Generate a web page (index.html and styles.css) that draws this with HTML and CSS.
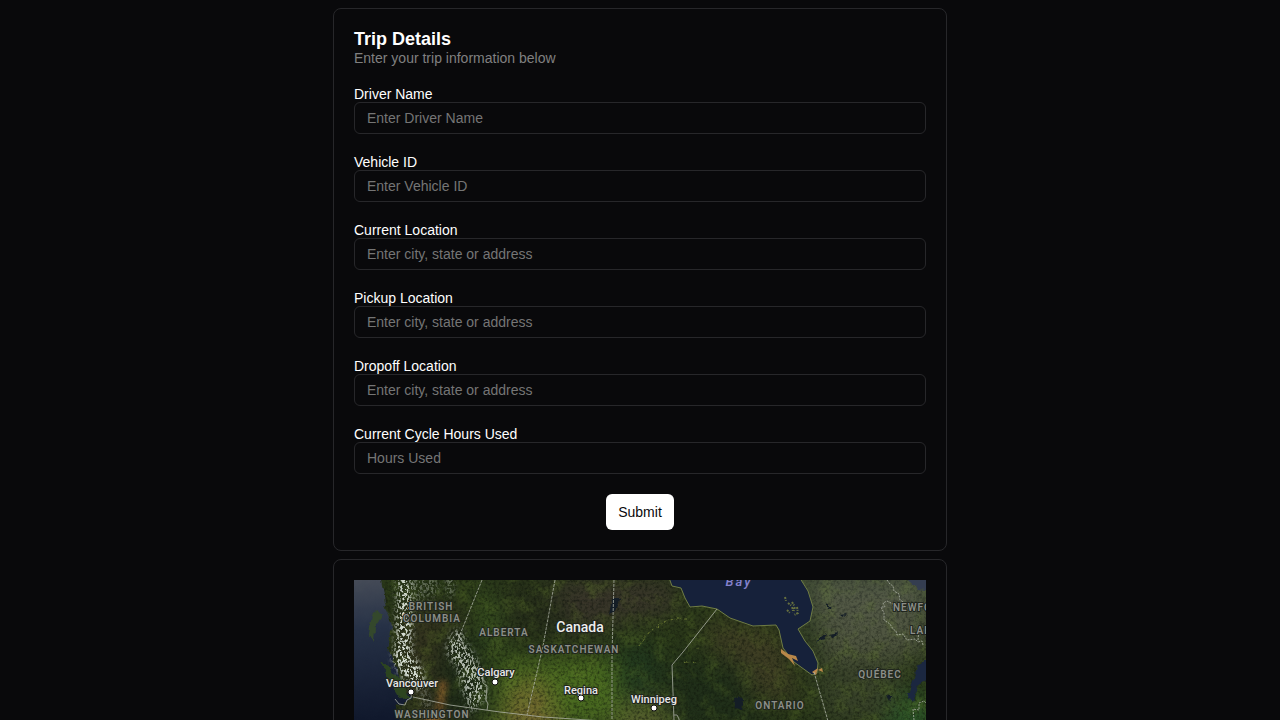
FILE: index.html
```html
<!DOCTYPE html>
<html lang="en">
<head>
<meta charset="utf-8">
<meta name="viewport" content="width=device-width, initial-scale=1">
<title>Trip Details</title>
<link rel="stylesheet" href="styles.css">
</head>
<body>
<main class="page">
  <section class="card">
    <form class="trip-form">
      <header>
        <h1 class="title">Trip Details</h1>
        <p class="subtitle">Enter your trip information below</p>
      </header>
      <div class="field">
        <label for="driver">Driver Name</label>
        <input id="driver" type="text" placeholder="Enter Driver Name">
      </div>
      <div class="field">
        <label for="vehicle">Vehicle ID</label>
        <input id="vehicle" type="text" placeholder="Enter Vehicle ID">
      </div>
      <div class="field">
        <label for="current">Current Location</label>
        <input id="current" type="text" placeholder="Enter city, state or address">
      </div>
      <div class="field">
        <label for="pickup">Pickup Location</label>
        <input id="pickup" type="text" placeholder="Enter city, state or address">
      </div>
      <div class="field">
        <label for="dropoff">Dropoff Location</label>
        <input id="dropoff" type="text" placeholder="Enter city, state or address">
      </div>
      <div class="field">
        <label for="hours">Current Cycle Hours Used</label>
        <input id="hours" type="text" placeholder="Hours Used">
      </div>
      <button class="submit" type="submit">Submit</button>
    </form>
  </section>

  <section class="card">
    <svg class="map" viewBox="0 0 572 400" preserveAspectRatio="xMidYMin slice" role="img" aria-label="Satellite map">
      <defs>
        <filter id="soft" x="-50%" y="-50%" width="200%" height="200%"><feGaussianBlur stdDeviation="12"/></filter>
        <filter id="edge" x="-50%" y="-50%" width="200%" height="200%"><feGaussianBlur stdDeviation="3"/></filter>
        <filter id="grain" x="0" y="0" width="100%" height="100%">
          <feTurbulence type="fractalNoise" baseFrequency="0.35" numOctaves="3" seed="4"/>
          <feColorMatrix values="0 0 0 0 0.04  0 0 0 0 0.06  0 0 0 0 0.03  2.4 0 0 0 -1"/>
        </filter>
        <filter id="mottle" x="0" y="0" width="100%" height="100%">
          <feTurbulence type="fractalNoise" baseFrequency="0.06" numOctaves="5" seed="9"/>
          <feColorMatrix values="0 0 0 0 0.38  0 0 0 0 0.48  0 0 0 0 0.17  0 3 0 0 -1.4"/>
        </filter>
        <filter id="snow" x="-10%" y="-10%" width="120%" height="120%">
          <feGaussianBlur in="SourceAlpha" stdDeviation="3" result="shape"/>
          <feTurbulence type="fractalNoise" baseFrequency="0.45 0.3" numOctaves="4" seed="12"/>
          <feColorMatrix values="0 0 0 0 0.84  0 0 0 0 0.87  0 0 0 0 0.83  7 0 0 0 -3.3"/>
          <feComposite in2="shape" operator="in"/>
        </filter>
        <filter id="rough" x="-5%" y="-5%" width="110%" height="110%">
          <feTurbulence type="fractalNoise" baseFrequency="0.12" numOctaves="3" seed="2" result="n"/>
          <feDisplacementMap in="SourceGraphic" in2="n" scale="6" xChannelSelector="R" yChannelSelector="G"/>
        </filter>
        <linearGradient id="pacific" gradientUnits="userSpaceOnUse" x1="0" y1="0" x2="12" y2="140">
          <stop offset="0" stop-color="#454b57"/><stop offset="0.35" stop-color="#263146"/><stop offset="1" stop-color="#10182c"/>
        </linearGradient>
        <linearGradient id="haze" x1="0" y1="0" x2="0" y2="1">
          <stop offset="0" stop-color="#8c939c" stop-opacity="0.16"/><stop offset="1" stop-color="#8c939c" stop-opacity="0"/>
        </linearGradient>
      </defs>

      <rect width="572" height="400" fill="#293719"/>
      <g filter="url(#soft)">
        <path fill="#34331f" d="M45 30h65v130H60z"/>
        <path fill="#1f2c18" d="M88 50h45l20 90H80z"/>
        <path fill="#3a5520" d="M128 8l55 12-30 50-30-10z"/>
        <path fill="#262e1a" d="M140 0h100v60h-90z"/>
        <path fill="#39352a" d="M195 0h120l15 30-110 20z"/>
        <path fill="#4a6b20" d="M140 80h55l75-4 18 64-150 10z"/>
        <path fill="#74682f" d="M158 106l30-8 20 60h-60z"/>
        <path fill="#20371e" d="M262 65h42v60h-38z"/>
        <path fill="#56602d" d="M268 120h48v50h-60z"/>
        <path fill="#3f3e24" d="M345 40l80 10 20 70-60-5z"/>
        <path fill="#202f19" d="M310 80h75l30 70h-100z"/>
        <path fill="#4b513a" d="M455 0h117v75l-100 10z"/>
        <path fill="#384229" d="M460 80h90v60h-80z"/>
        <path fill="#2b5427" d="M540 115h40v60h-50z"/>
        <path fill="#596222" d="M95 205h190v195H70z"/>
      </g>
      <rect class="fine" width="572" height="400" filter="url(#mottle)" opacity="0.32"/>
      <g fill="#9a642e" filter="url(#edge)" opacity="0.8">
        <path d="M86 100l7 2-4 25-7 10z"/><path d="M72 134l18-3-6 18H70z"/>
      </g>
      <rect class="fine" width="572" height="400" filter="url(#grain)" opacity="0.5"/>
      <rect x="440" width="132" height="90" fill="url(#haze)"/>

      <g filter="url(#rough)">
        <path fill="url(#pacific)" d="M-8-8H26L32 28 38 45 34 68 42 88 48 106 58 116 48 126 42 124 48 150 40 408H-8z"/>
        <path fill="#34482c" d="M18 35l7-4 3 5-7 11-1 16-5-10z"/>
        <path fill="#2c4420" d="M27 82l9 6 15 18 5 12-10 1-10-17z"/>
        <path fill="#1b2740" d="M563 87l11-9v22l-9 5-7 18-4-5z"/>
        <path fill="#343d50" d="M548-5h30v16l-14-2z"/>
        <path fill="#141d26" d="M258 19l7 0-2 8-4 5-4 2zM379 119l6-3 5 5-2 9-7-1zM532 115l7 2-4 4zM466 57l7-4-3 6-9 4zM476 54l9-2-6 6zM486 34l8-1-5 3zM471 24l7 3-4 2z"/>
      </g>
      <path fill="#16213a" stroke="#6f7c45" d="M314-5l4 11 9 2 4 10 5 9 12-1 15 3 13 9 23 8 23-1 3 5 4 18 11 14 18 13 5-2 1-10-5-12-8-10-7-12 12-8 3-14-5-16-10-16z"/>
      <path fill="#b98749" d="M427 69l7 5 8 2 2 5-6-3 3 8-6-7-8-6zM458 92l6-4-2 7zM464 90l4-2 1 4z"/>
      <path fill="none" stroke="#66703f" stroke-width="2" stroke-dasharray="2 1 1 2" d="M434 23l4 3 1 5M438 22l3 5-2 6M443 27l1 6-4 2M431 17l1 4M433 30l3 3"/>

      <g class="fine" filter="url(#snow)">
        <path fill="#fff" d="M44-5h12l1 24 1 27-1 26 12 20 1 18-11-1-12-14-8-15 3-20z"/>
        <path fill="#fff" opacity="0.5" d="M93-5h6v21h-6z"/>
        <path fill="#fff" opacity="0.8" d="M100 50l8 1 2 10 12 17 8 23 2 19-7 1-8 14-8-26-6-22-9-12-1-10z"/>
        <path fill="#fff" opacity="0.3" d="M56-5h28v20l-25 8zM66 105l9 10 4 30-10-10z"/>
      </g>
      <path filter="url(#rough)" fill="none" stroke="#6f7d34" stroke-dasharray="3 1 1 2" d="M284 66l12-15 12-8 10-5 14 0M331 81l3 2 8-1M341 70l4-2"/>

      <g class="border">
        <path stroke-dasharray="3 1" d="M128 0L107 52M201 0L189 66 173 135M260 0L258 75V141M460 92L474 141"/>
        <path d="M107 52l-3 8 5 4 3 9 6 5 4 12 6 5 1 8 4 3-1 14 2 4-1 6M59 117l37 8 50 7 43 5 60 4 75 2M363 29L329 72 318 85 320 140M320 135h3l2 4v4"/>
        <path d="M41 119l4 5 6 1 2-5 4-2 1-7"/>
        <path stroke-dasharray="2 1" d="M533 0l3 4 3 2 1 5 5 3 1 6 5 3M549 25l-10-1-6-3-4 2 2 4-4 0 3 6 0 7 6 4 3 5 3 2 1 4 6-1 4 6 8-1 3 3 4-1 1 4M564 60l1-10 7 5M560 140l-1-11 6 1 0-7 5-2 2 2"/>
      </g>

      <g class="region">
        <text x="77" y="30">BRITISH</text><text x="78" y="42">COLUMBIA</text>
        <text x="150" y="56">ALBERTA</text><text x="220" y="73">SASKATCHEWAN</text>
        <text x="78" y="138">WASHINGTON</text><text x="426" y="129">ONTARIO</text>
        <text x="526" y="98">QUÉBEC</text><text class="start" x="539" y="31">NEWFOUNDLAND</text><text class="start" x="556" y="54">LABRADOR</text>
      </g>
      <text class="water" x="385" y="6">Bay</text>
      <text class="country" x="226" y="52">Canada</text>
      <g class="city">
        <text x="58" y="107">Vancouver</text><circle cx="57" cy="112" r="3"/>
        <text x="142" y="96">Calgary</text><circle cx="141" cy="102" r="3"/>
        <text x="227" y="114">Regina</text><circle cx="227" cy="118" r="3"/>
        <text x="300" y="123">Winnipeg</text><circle cx="300" cy="128" r="3"/>
      </g>
    </svg>
  </section>
</main>
</body>
</html>
```

FILE: styles.css
```css
* {
  box-sizing: border-box;
}

body {
  margin: 0;
  background: #09090b;
  color: #fff;
  font: 14px/16px "Liberation Sans", Arial, sans-serif;
}

.page {
  display: flex;
  flex-direction: column;
  align-items: center;
  gap: 8px;
  padding: 8px;
}

.card {
  width: 614px;
  max-width: 100%;
  padding: 20px;
  border: 1px solid #27272a;
  border-radius: 8px;
}

.trip-form {
  display: flex;
  flex-direction: column;
  gap: 20px;
}

.title {
  margin: 0;
  font-size: 18px;
  line-height: 21px;
}

.subtitle {
  margin: 0;
  color: #808080;
}

.field {
  display: flex;
  flex-direction: column;
}

.field input {
  width: 100%;
  height: 32px;
  padding: 0 12px;
  border: 1px solid #27272a;
  border-radius: 6px;
  background: transparent;
  color: #fff;
  font: inherit;
}

.field input::placeholder {
  color: #757575;
}

.submit {
  align-self: center;
  height: 36px;
  padding: 0 12px;
  border: 0;
  border-radius: 6px;
  background: #fff;
  color: #09090b;
  font: inherit;
}

.map {
  display: block;
  width: 100%;
  height: 400px;
  font-family: Roboto, "Open Sans", sans-serif;
}

.map filter,
.map filter * {
  color-interpolation-filters: sRGB;
}

.map text {
  text-anchor: middle;
  paint-order: stroke;
  stroke: #20251e;
  stroke-width: 2px;
  stroke-linejoin: round;
}

.border {
  fill: none;
  stroke: #b4b8ad;
  stroke-width: 1px;
  opacity: 0.75;
}

.region text {
  fill: #8c8f88;
  font-size: 10px;
  font-weight: 600;
  letter-spacing: 1px;
}

.region .start {
  text-anchor: start;
}

.map .water {
  fill: #8583cf;
  stroke: #18223a;
  font-size: 13px;
  font-style: italic;
  font-weight: 500;
  letter-spacing: 2px;
}

.map .country {
  fill: #eee;
  font-size: 14px;
  font-weight: 500;
}

.city text {
  fill: #e8e8e8;
  font-size: 11px;
  font-weight: 500;
}

.city circle {
  fill: #fff;
  stroke: #111;
  stroke-width: 1px;
}
```
